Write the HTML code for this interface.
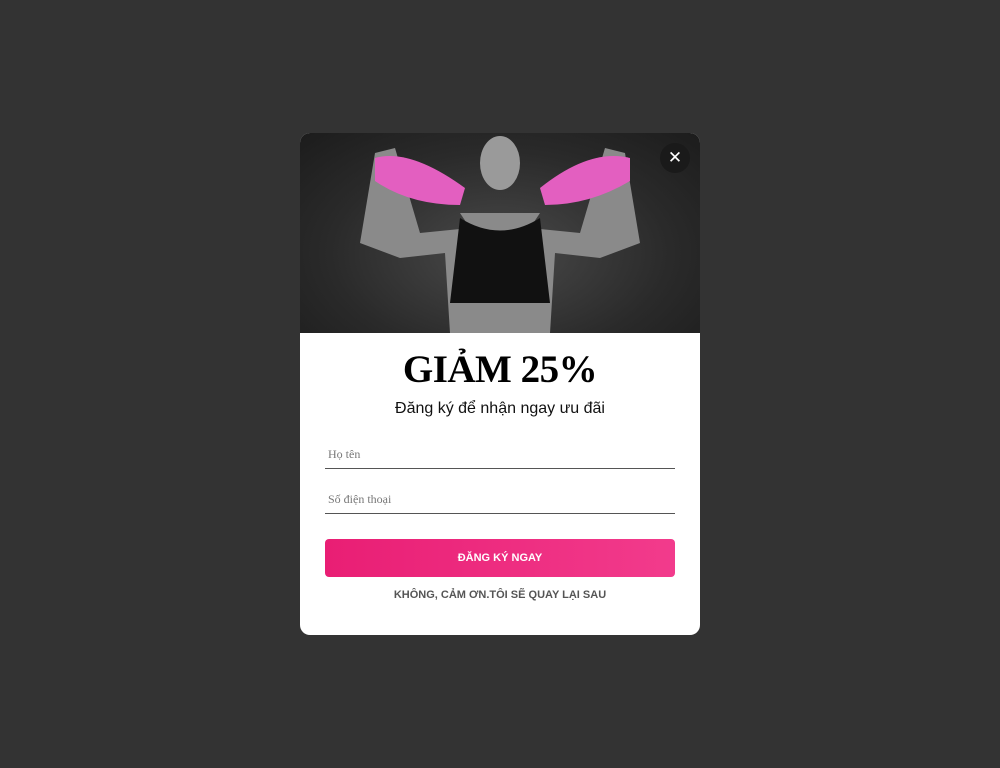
<!DOCTYPE html>
<html><head><meta charset="utf-8"><style>
body{margin:0;width:1000px;height:768px;background:#333;font-family:"Liberation Sans",sans-serif;position:relative;overflow:hidden}
.m{position:absolute;left:300px;top:133px;width:400px;height:502px;background:#fff;border-radius:10px;overflow:hidden}
.img{position:absolute;left:0;top:0;width:400px;height:200px;background:radial-gradient(ellipse at 50% 60%,#4a4a4a,#2a2a2a 60%,#1c1c1c)}
.x{position:absolute;left:360px;top:10px;width:30px;height:30px;border-radius:50%;background:#1a1a1a;color:#fff;text-align:center;line-height:30px;font-size:17px}
h1{position:absolute;top:213px;left:0;width:400px;margin:0;text-align:center;font-family:"Liberation Serif",serif;font-weight:bold;font-size:39px;line-height:48px;color:#000;letter-spacing:-0.5px}
.sub{position:absolute;top:267px;width:400px;text-align:center;font-size:16px;color:#111}
.f{position:absolute;left:25px;width:350px;border-bottom:1px solid #555;font-family:"Liberation Serif",serif;font-size:12px;color:#777;padding-left:3px;padding-top:4px;box-sizing:border-box}
.b{position:absolute;left:25px;top:406px;width:350px;height:38px;border-radius:4px;background:linear-gradient(90deg,#e91e74,#f23b8c);color:#fff;font-weight:bold;font-size:11px;text-align:center;line-height:38px}
.n{position:absolute;top:456px;width:400px;text-align:center;font-size:11px;color:#555;font-weight:bold}
</style></head><body>
<div class="m">
<div class="img"><svg width="400" height="200">
<ellipse cx="200" cy="30" rx="20" ry="27" fill="#9a9a9a"/>
<path d="M75 20 L95 15 L120 100 L170 95 L160 80 L240 80 L230 95 L280 100 L305 15 L325 20 L340 110 L300 125 L255 120 L250 200 L150 200 L145 120 L100 125 L60 110Z" fill="#8a8a8a"/>
<path d="M160 85 Q200 110 240 85 L250 170 L150 170Z" fill="#111"/>
<path d="M75 25 Q110 15 165 55 L160 72 Q110 72 75 48Z" fill="#e35fc0"/>
<path d="M240 55 Q290 15 330 25 L330 48 Q290 72 245 72Z" fill="#e35fc0"/>
</svg><div class="x">✕</div></div>
<h1>GIẢM 25%</h1>
<div class="sub">Đăng ký để nhận ngay ưu đãi</div>
<div class="f" style="top:310px;height:26px">Họ tên</div>
<div class="f" style="top:355px;height:26px">Số điện thoại</div>
<div class="b">ĐĂNG KÝ NGAY</div>
<div class="n">KHÔNG, CẢM ƠN.TÔI SẼ QUAY LẠI SAU</div>
</div>
</body></html>
